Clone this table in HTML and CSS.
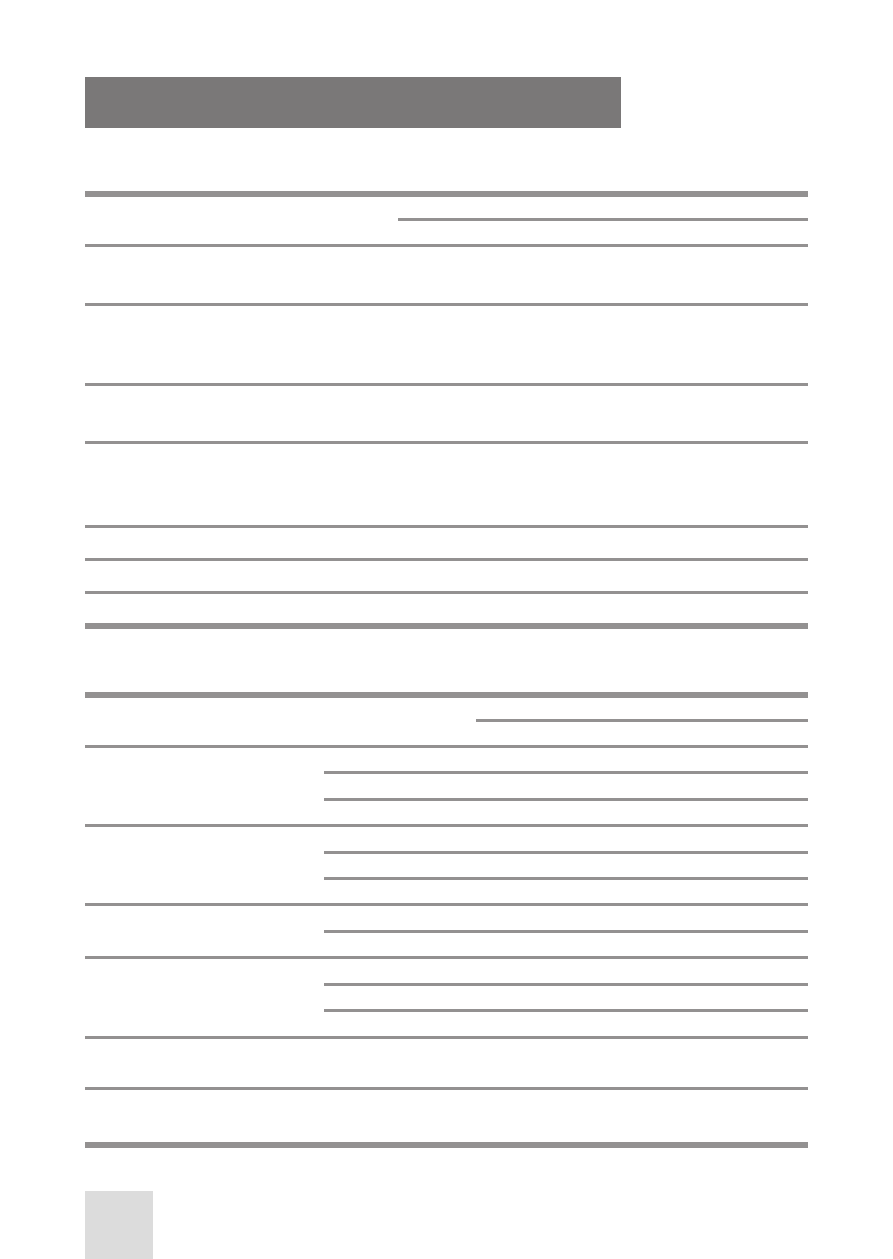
FILE: index.html
```html
<!DOCTYPE html>
<html lang="en">
<head>
<meta charset="utf-8">
<title>Tables</title>
<link rel="stylesheet" href="styles.css">
</head>
<body>
<div class="page">
  <div class="title-bar"></div>

  <section class="table t1">
    <div class="row head h47">
      <div class="cell left w313"></div>
      <div class="cell group">
        <div class="group-top h21"></div>
        <div class="group-bottom h23"></div>
      </div>
    </div>
    <div class="row h56"></div>
    <div class="row h77"></div>
    <div class="row h55"></div>
    <div class="row h81"></div>
    <div class="row h30"></div>
    <div class="row h30"></div>
    <div class="row last h29"></div>
  </section>

  <section class="table t2">
    <div class="row head h47">
      <div class="cell left w391"></div>
      <div class="cell group">
        <div class="group-top h21"></div>
        <div class="group-bottom h23"></div>
      </div>
    </div>
    <div class="row split">
      <div class="cell left w239"></div>
      <div class="cell subs">
        <div class="sub h23"></div>
        <div class="sub h24"></div>
        <div class="sub h23"></div>
      </div>
    </div>
    <div class="row split">
      <div class="cell left w239"></div>
      <div class="cell subs">
        <div class="sub h24"></div>
        <div class="sub h23"></div>
        <div class="sub h23"></div>
      </div>
    </div>
    <div class="row split">
      <div class="cell left w239"></div>
      <div class="cell subs">
        <div class="sub h24"></div>
        <div class="sub h23"></div>
      </div>
    </div>
    <div class="row split">
      <div class="cell left w239"></div>
      <div class="cell subs">
        <div class="sub h24"></div>
        <div class="sub h23"></div>
        <div class="sub h24"></div>
      </div>
    </div>
    <div class="row h48"></div>
    <div class="row last h52"></div>
  </section>

  <div class="page-tab"></div>
</div>
</body>
</html>
```

FILE: styles.css
```css
* {
  box-sizing: content-box;
}

html, body {
  margin: 0;
  padding: 0;
  background: #ffffff;
  font-family: "Liberation Sans", Arial, sans-serif;
}

.page {
  padding: 77px 0 0 85px;
  width: 723px;
  height: 1182px;
  overflow: hidden;
}

.title-bar {
  width: 536px;
  height: 51px;
  background: #7a7878;
}

.table {
  width: 723px;
  border-top: 6px solid #939191;
  border-bottom: 6px solid #939191;
}

.t1 {
  margin-top: 63px;
}

.t2 {
  margin-top: 63px;
}

.row {
  display: flex;
  border-bottom: 3px solid #939191;
}

.row.last {
  border-bottom: none;
}

.cell {
  flex: none;
}

.cell.group,
.cell.subs {
  flex: 1;
}

.group-top {
  border-bottom: 3px solid #939191;
}

.sub {
  border-bottom: 3px solid #939191;
}

.sub:last-child {
  border-bottom: none;
}

.w313 { width: 313px; }
.w391 { width: 391px; }
.w239 { width: 239px; }

.h21 { height: 21px; }
.h23 { height: 23px; }
.h24 { height: 24px; }
.h29 { height: 29px; }
.h30 { height: 30px; }
.h47 { height: 47px; }
.h48 { height: 48px; }
.h52 { height: 52px; }
.h55 { height: 55px; }
.h56 { height: 56px; }
.h77 { height: 77px; }
.h81 { height: 81px; }

.page-tab {
  margin-top: 43px;
  width: 68px;
  height: 80px;
  background: #dcdcdc;
}
```
